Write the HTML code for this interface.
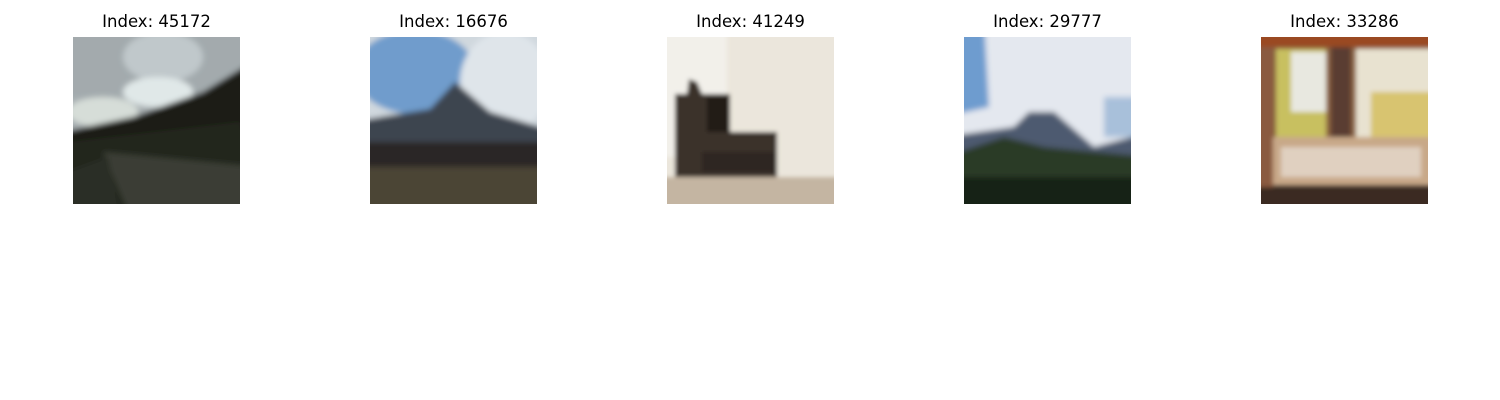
<!DOCTYPE html>
<html><head><style>
body{margin:0;width:1500px;height:400px;background:#fff;position:relative;overflow:hidden;font-family:"DejaVu Sans","Liberation Sans",sans-serif}
.t{position:absolute;top:12px;width:200px;text-align:center;font-size:16.5px;color:#000}
svg{position:absolute;top:37px;width:167px;height:167px;overflow:hidden}
</style></head><body>
<div class="t" style="left:56.5px">Index: 45172</div>
<div class="t" style="left:353.5px">Index: 16676</div>
<div class="t" style="left:650.5px">Index: 41249</div>
<div class="t" style="left:947.5px">Index: 29777</div>
<div class="t" style="left:1244.5px">Index: 33286</div>
<svg style="left:73px" viewBox="0 0 167 167"><defs><filter id="b" x="-30%" y="-30%" width="160%" height="160%"><feGaussianBlur stdDeviation="3"/></filter></defs>
<g filter="url(#b)">
<rect x="-20" y="-20" width="207" height="207" fill="#a9b0b3"/>
<rect x="-20" y="-20" width="207" height="80" fill="#a3aaad"/>
<ellipse cx="90" cy="20" rx="40" ry="25" fill="#c0c8cb"/>
<ellipse cx="85" cy="55" rx="35" ry="15" fill="#e0e8e8"/>
<ellipse cx="30" cy="75" rx="35" ry="15" fill="#d6ddd8"/>
<polygon points="-20,97 60,80 130,55 187,20 187,187 -20,187" fill="#1d1f16"/>
<polygon points="-20,107 167,85 187,187 -20,187" fill="#23261c"/>
<polygon points="30,115 187,130 187,187 60,187" fill="#3a3d35"/>
<polygon points="-20,140 35,120 50,187 -20,187" fill="#2b2f25"/>
</g></svg>
<svg style="left:370px" viewBox="0 0 167 167"><defs><filter id="b2" x="-30%" y="-30%" width="160%" height="160%"><feGaussianBlur stdDeviation="3"/></filter></defs>
<g filter="url(#b2)">
<rect x="-20" y="-20" width="207" height="207" fill="#d0d8de"/>
<ellipse cx="45" cy="35" rx="60" ry="42" fill="#6f9ccc"/>
<ellipse cx="135" cy="45" rx="45" ry="50" fill="#dfe5ea"/>
<polygon points="-20,85 60,72 85,45 120,75 187,95 187,187 -20,187" fill="#3c4450"/>
<rect x="-20" y="105" width="207" height="30" fill="#2a2526"/>
<rect x="-20" y="130" width="207" height="60" fill="#4b4436"/>
</g></svg>
<svg style="left:667px" viewBox="0 0 167 167"><defs><filter id="b3" x="-30%" y="-30%" width="160%" height="160%"><feGaussianBlur stdDeviation="2"/></filter></defs>
<g filter="url(#b3)">
<rect x="-20" y="-20" width="207" height="207" fill="#ebe6dc"/>
<rect x="-20" y="-20" width="80" height="140" fill="#f2f0ea"/>
<rect x="-20" y="140" width="207" height="50" fill="#c4b5a2"/>
<polygon points="8,57 20,57 22,42 30,45 35,57 63,57 63,95 110,95 110,140 8,140" fill="#3a322c"/>
<rect x="40" y="60" width="23" height="35" fill="#231c17"/>
<rect x="35" y="115" width="75" height="20" fill="#2e2722"/>
</g></svg>
<svg style="left:964px" viewBox="0 0 167 167"><defs><filter id="b4" x="-30%" y="-30%" width="160%" height="160%"><feGaussianBlur stdDeviation="3"/></filter></defs>
<g filter="url(#b4)">
<rect x="-20" y="-20" width="207" height="207" fill="#e4e8ef"/>
<polygon points="-20,-20 20,-20 25,70 -20,80" fill="#6e9ccf"/>
<rect x="140" y="60" width="47" height="40" fill="#a8c0da"/>
<polygon points="-20,100 50,90 65,75 90,75 130,110 187,95 187,187 -20,187" fill="#4d5a70"/>
<polygon points="-20,120 40,100 80,110 187,120 187,187 -20,187" fill="#2a3a26"/>
<rect x="-20" y="140" width="207" height="50" fill="#172015"/>
</g></svg>
<svg style="left:1261px" viewBox="0 0 167 167"><defs><filter id="b5" x="-30%" y="-30%" width="160%" height="160%"><feGaussianBlur stdDeviation="2.5"/></filter></defs>
<g filter="url(#b5)">
<rect x="-20" y="-20" width="207" height="207" fill="#8a6040"/>
<rect x="-20" y="-20" width="207" height="30" fill="#9a4a20"/>
<rect x="15" y="12" width="50" height="90" fill="#c8c060"/>
<rect x="30" y="15" width="35" height="60" fill="#e8e8e0"/>
<rect x="70" y="10" width="20" height="100" fill="#5a3e30"/>
<rect x="95" y="12" width="92" height="90" fill="#e8e2d0"/>
<rect x="110" y="55" width="77" height="45" fill="#d8c470"/>
<rect x="-20" y="100" width="207" height="50" fill="#c8a888"/>
<rect x="20" y="110" width="140" height="30" fill="#e0d0c0"/>
<rect x="-20" y="148" width="207" height="40" fill="#3a2a20"/>
<rect x="-20" y="10" width="32" height="140" fill="#8a5a40"/>
</g></svg>
</body></html>
